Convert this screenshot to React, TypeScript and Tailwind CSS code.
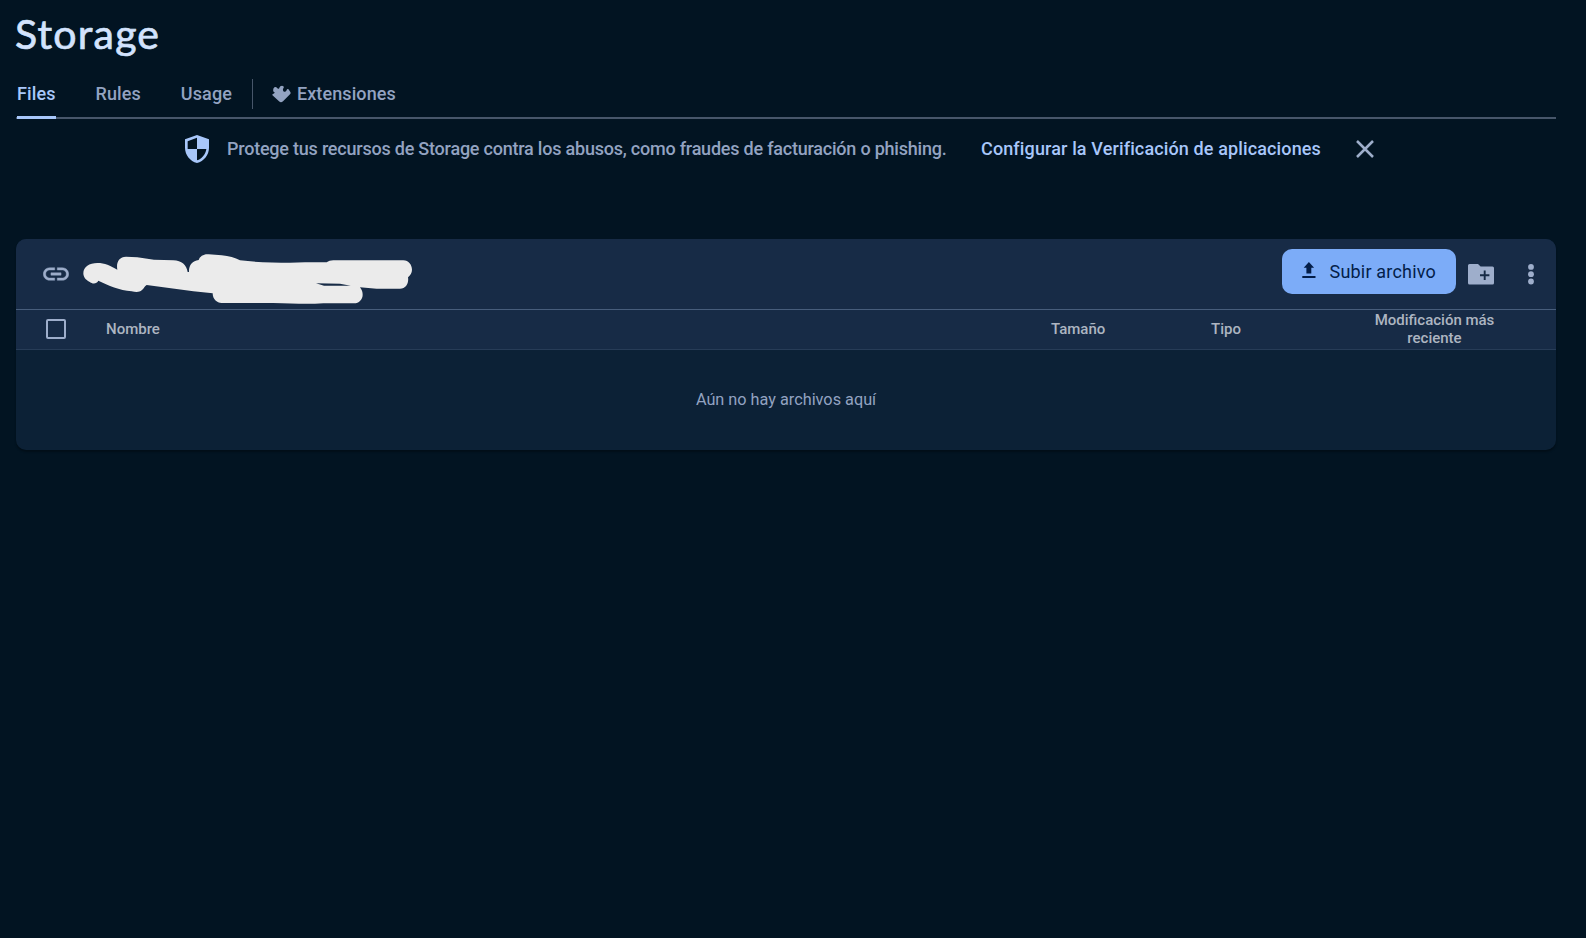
import React from "react";

const tabs = ["Files", "Rules", "Usage"];

function ExtensionIcon() {
  return (
    <svg width="19" height="18" viewBox="0 0 57 54" fill="currentColor" className="block">
      <path d="M5 10Q8 4 13 7L18 11Q22 12 22 8Q24 2 30 2Q37 3 35 8L33 12Q32 18 36 20Q41 21 43 17L45 13Q49 10 51 15L55 21Q57 25 54 28L33 49Q27 55 21 49L3 32Q-1 29 3 27Q8 26 8 22Q2 19 4 15Q3 12 5 10Z" />
    </svg>
  );
}

function Redaction() {
  return (
    <svg width="329" height="50" viewBox="249 72 987 150" className="block" fill="#ebebeb">
      <path d="M250 130C250 110 268 99 292 99C315 99 330 107 352 119C348 98 357 80 378 80L412 82L462 89L520 91C545 92 560 105 563 126H567C566 106 577 92 596 90C600 79 610 72 626 73L665 76C687 78 705 83 720 91C765 97 820 98 870 98L915 97L980 97C985 93 992 91 1000 91H1210C1226 91 1236 105 1236 119C1236 129 1231 136 1224 142C1227 159 1218 176 1200 176H1130L1080 172C1086 180 1088 187 1088 194C1088 208 1077 220 1062 220H970C925 223 880 221 820 219H665C650 219 638 207 638 190L580 184L440 165C434 168 432 176 426 180C417 188 407 186 395 184C358 180 325 167 295 152C290 162 278 163 268 155C257 150 250 141 250 130Z" />
      <path d="M948 160L1020 161L1052 167H972Z" fill="#172b46" />
    </svg>
  );
}

export default function App() {
  return (
    <div className="h-[938px] w-[1586px] overflow-hidden bg-[#021422] pl-4 pr-[30px] font-['Roboto',sans-serif] text-[#93a3c1]">
      <h1 className="h-[74px] pt-[10px] font-['Lato',sans-serif] text-[41px] leading-[48px] whitespace-nowrap text-[#d3e3fd]">
        <span className="inline-block -ml-px tracking-[1.2px] [-webkit-text-stroke:0.7px_#d3e3fd]">Storage</span>
      </h1>

      <nav className="flex h-[45px] items-stretch border-b-2 border-[#47566a] text-[18px] font-medium tracking-[0.1px]">
        {tabs.map((tab, i) => (
          <div
            key={tab}
            className={
              i === 0
                ? "-mb-0.5 ml-px mr-10 flex border-b-[3px] border-[#a8c7fa] pt-[7px] leading-[25px] text-[#a8c7fa]"
                : i === 1
                  ? "mr-10 pt-[7px] leading-[25px]"
                  : "mr-5 pt-[7px] leading-[25px]"
            }
          >
            {tab}
          </div>
        ))}
        <div className="mr-[19px] mt-[5px] h-[30px] w-px bg-[#47566a]" />
        <div className="flex items-start pt-[7px] leading-[25px]">
          <span className="mr-[6px] mt-[4px]"><ExtensionIcon /></span>
          Extensiones
        </div>
      </nav>

      <div className="flex h-[60px] items-center pl-[169px] text-[18px] font-medium whitespace-nowrap">
        <svg width="24" height="28" viewBox="3 1 18 22" preserveAspectRatio="none" fill="#a8c7fa">
          <path d="M12 1L3 4.4V11c0 5.55 3.84 10.74 9 12 5.16-1.26 9-6.45 9-12V4.4L12 1zm0 10.99h7c-.53 4.12-3.28 7.79-7 8.94V12H5V6l7-2.81v8.8z" />
        </svg>
        <span className="ml-[18px] w-[754px] pb-0.5 tracking-[-0.22px]">
          Protege tus recursos de Storage contra los abusos, como fraudes de facturación o phishing.
        </span>
        <span className="w-[375px] pb-0.5 tracking-[0.13px] text-[#a8c7fa]">Configurar la Verificación de aplicaciones</span>
        <svg width="18" height="18" viewBox="0 0 18 18" stroke="#9eaecb" strokeWidth="2.5" fill="none">
          <path d="M1 1l16 16M17 1L1 17" />
        </svg>
      </div>

      <section className="mt-[60px] h-[211px] overflow-hidden rounded-[10px] bg-[#0c2136] shadow-[0_2px_2px_rgba(0,0,0,0.3)]">
        <div className="flex h-[71px] border-b border-[#475d7b] bg-[#172b46]">
          <svg width="26" height="14" viewBox="1.8 6.8 20.4 10.4" fill="#9eaecb" stroke="#9eaecb" strokeWidth="0.3" className="ml-[27px] mt-[28px]">
            <path d="M3.9 12c0-1.71 1.39-3.1 3.1-3.1h4V7H7c-2.76 0-5 2.24-5 5s2.24 5 5 5h4v-1.9H7c-1.71 0-3.1-1.39-3.1-3.1zM8 13h8v-2H8v2zm9-6h-4v1.9h4c1.71 0 3.1 1.39 3.1 3.1s-1.39 3.1-3.1 3.1h-4V17h4c2.76 0 5-2.24 5-5s-2.24-5-5-5z" />
          </svg>
          <div className="ml-[14px] mt-[15px]">
            <Redaction />
          </div>
          <button className="ml-auto mt-[10px] flex h-[45px] w-[174px] items-center rounded-[10px] bg-[#7cacf8] pl-5 text-[18px] text-[#041e49]">
            <svg width="14" height="17" viewBox="0 0 14 17" fill="#041e49" className="mr-[13.5px] -mt-[3px]">
              <path d="M0.3 14h13.2v1.9H0.3zM6.9 0L12.1 5.8H9.3V11.6H4.4V5.8H1.7z" />
            </svg>
            <span className="tracking-[0.2px] whitespace-nowrap">Subir archivo</span>
          </button>
          <svg width="26" height="21" viewBox="0 0 26 21" fill="#9eaecb" className="ml-3 mt-[25px]">
            <path d="M1.5 0H10l2.6 2.6h11.9Q26 2.6 26 4.1v14.8q0 1.5-1.5 1.5H1.5Q0 20.4 0 18.9V1.5Q0 0 1.5 0z" />
            <path d="M12 11.3h9.4M16.7 6.6V16" stroke="#172b46" strokeWidth="1.9" fill="none" />
          </svg>
          <svg width="6" height="21" viewBox="0 0 6 21" fill="#9eaecb" className="ml-[34px] mr-[22px] mt-[25px]">
            <circle cx="3" cy="2.9" r="2.9" />
            <circle cx="3" cy="10.2" r="2.9" />
            <circle cx="3" cy="17.5" r="2.9" />
          </svg>
        </div>
        <div className="flex h-[40px] items-center border-b border-[#273c57] bg-[#172b46] pb-[2px] text-[15px] font-medium leading-[18px] text-[#adb5c1]">
          <div className="ml-[30px] h-5 w-5 rounded-[2px] border-2 border-[#9eaecb]" />
          <span className="ml-10 w-[945px]">Nombre</span>
          <span className="w-[160px]">Tamaño</span>
          <span className="w-[143px]">Tipo</span>
          <span className="w-[161px] text-center">
            Modificación más
            <br />
            reciente
          </span>
        </div>
        <p className="pt-[38px] text-center text-[16.25px] leading-[24px]">Aún no hay archivos aquí</p>
      </section>
    </div>
  );
}
